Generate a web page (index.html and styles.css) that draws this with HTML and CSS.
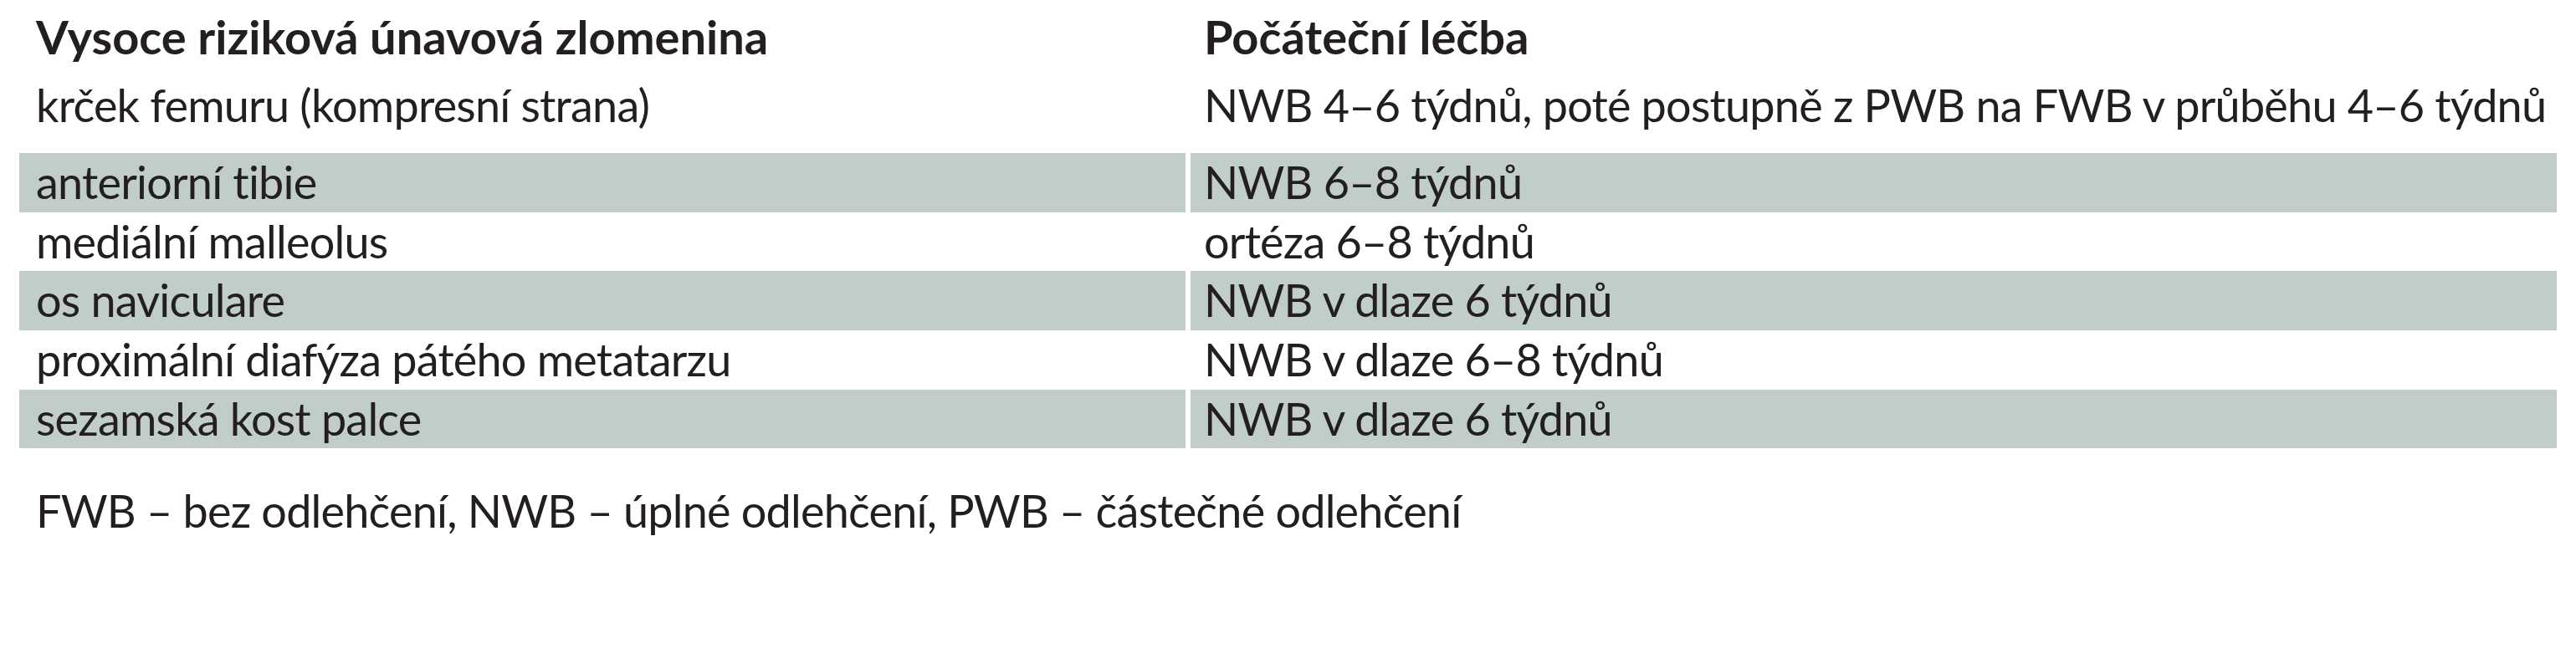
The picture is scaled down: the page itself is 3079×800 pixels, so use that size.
FILE: index.html
```html
<!DOCTYPE html>
<html lang="cs">
<head>
<meta charset="utf-8">
<title>Vysoce riziková únavová zlomenina</title>
<link rel="stylesheet" href="styles.css">
</head>
<body>
<div class="page">
  <div class="table">
    <div class="cell head left">Vysoce riziková únavová zlomenina</div>
    <div class="cell head right">Počáteční léčba</div>

    <div class="cell left">krček femuru (kompresní strana)</div>
    <div class="cell right">NWB 4–6 týdnů, poté postupně z PWB na FWB v průběhu 4–6 týdnů</div>

    <div class="cell left shade">anteriorní tibie</div>
    <div class="cell right shade">NWB 6–8 týdnů</div>

    <div class="cell left">mediální malleolus</div>
    <div class="cell right">ortéza 6–8 týdnů</div>

    <div class="cell left shade">os naviculare</div>
    <div class="cell right shade">NWB v dlaze 6 týdnů</div>

    <div class="cell left">proximální diafýza pátého metatarzu</div>
    <div class="cell right">NWB v dlaze 6–8 týdnů</div>

    <div class="cell left shade">sezamská kost palce</div>
    <div class="cell right shade">NWB v dlaze 6 týdnů</div>
  </div>
  <p class="note">FWB – bez odlehčení, NWB – úplné odlehčení, PWB – částečné odlehčení</p>
</div>
</body>
</html>
```

FILE: styles.css
```css
html, body {
  margin: 0;
  padding: 0;
  background: #ffffff;
}

.page {
  padding-left: 23px;
  font-family: Lato, "Noto Sans", "DejaVu Sans", sans-serif;
  font-size: 54px;
  color: #231f20;
}

.table {
  display: grid;
  grid-template-columns: 1394px 1633px;
  grid-template-rows: 91px 92px repeat(5, 70.7px);
  column-gap: 6px;
  width: 3033px;
}

.cell {
  line-height: 70.7px;
  letter-spacing: -0.8px;
  white-space: nowrap;
}

.cell.left {
  padding-left: 20px;
}

.cell.right {
  padding-left: 16px;
}

.cell.head {
  padding-top: 9px;
  font-size: 56px;
  font-weight: 700;
  letter-spacing: 0;
}

.cell.shade {
  background: #c1cdc9;
}

.note {
  margin: 40px 0 0 0;
  padding-left: 20px;
  line-height: 70.7px;
  letter-spacing: -0.8px;
  white-space: nowrap;
}
```
